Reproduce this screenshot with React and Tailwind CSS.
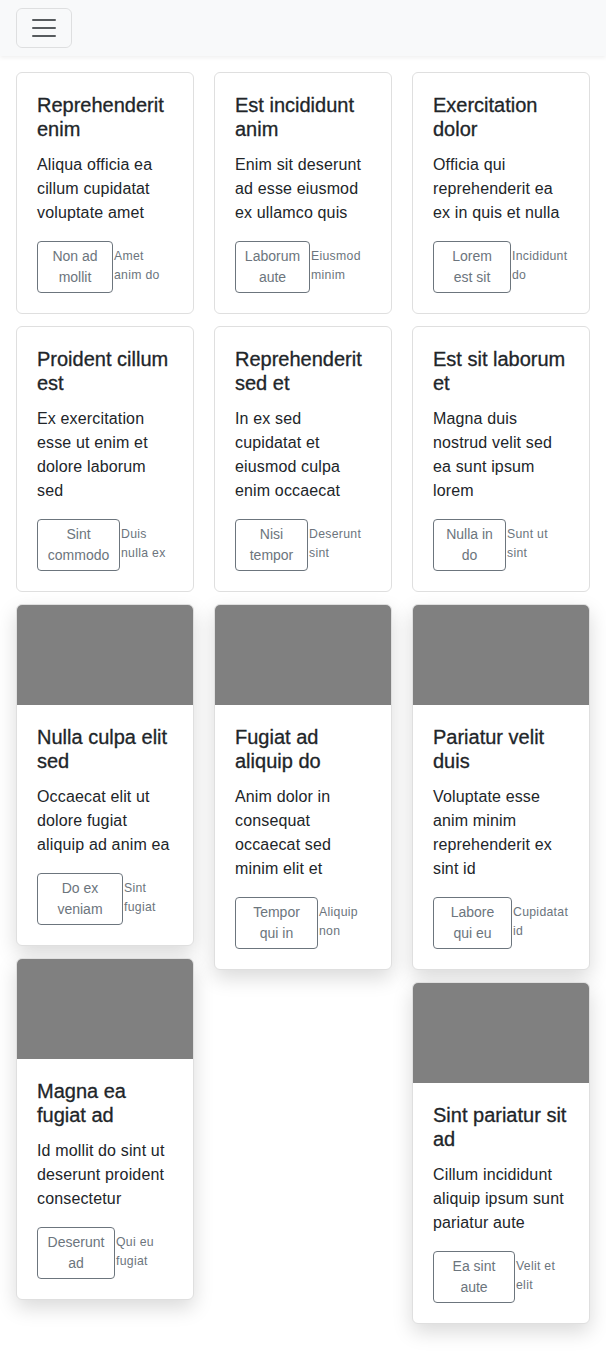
const GRID = [
  { title:"Reprehenderit enim", text:"Aliqua officia ea cillum cupidatat voluptate amet", btn:"Non ad mollit", w:"w-[76px]", note:"Amet anim do" },
  { title:"Est incididunt anim", text:"Enim sit deserunt ad esse eiusmod ex ullamco quis", btn:"Laborum aute", w:"w-[75px]", note:"Eiusmod minim" },
  { title:"Exercitation dolor", text:"Officia qui reprehenderit ea ex in quis et nulla", btn:"Lorem est sit", w:"w-[78px]", note:"Incididunt do" },
  { title:"Proident cillum est", text:"Ex exercitation esse ut enim et dolore laborum sed", btn:"Sint commodo", w:"w-[83px]", note:"Duis nulla ex" },
  { title:"Reprehenderit sed et", text:"In ex sed cupidatat et eiusmod culpa enim occaecat", btn:"Nisi tempor", w:"w-[73px]", note:"Deserunt sint" },
  { title:"Est sit laborum et", text:"Magna duis nostrud velit sed ea sunt ipsum lorem", btn:"Nulla in do", w:"w-[73px]", note:"Sunt ut sint" },
];

const COLUMNS = [
  [
    { title:"Nulla culpa elit sed", text:"Occaecat elit ut dolore fugiat aliquip ad anim ea", btn:"Do ex veniam", w:"w-[86px]", note:"Sint fugiat" },
    { title:"Magna ea fugiat ad", text:"Id mollit do sint ut deserunt proident consectetur", btn:"Deserunt ad", w:"w-[78px]", note:"Qui eu fugiat" },
  ],
  [
    { title:"Fugiat ad aliquip do", text:"Anim dolor in consequat occaecat sed minim elit et", btn:"Tempor qui in", w:"w-[83px]", note:"Aliquip non" },
  ],
  [
    { title:"Pariatur velit duis", text:"Voluptate esse anim minim reprehenderit ex sint id", btn:"Labore qui eu", w:"w-[79px]", note:"Cupidatat id" },
    { title:"Sint pariatur sit ad", text:"Cillum incididunt aliquip ipsum sunt pariatur aute", btn:"Ea sint aute", w:"w-[82px]", note:"Velit et elit" },
  ],
];

const CardBody = ({ item }) => (
  <div className="p-5">
    <h5 className="text-[20px] leading-6 font-medium mb-3 [-webkit-text-stroke:0.3px_#212529]">{item.title}</h5>
    <p className="text-base leading-6 tracking-[0.15px] mb-4">{item.text}</p>
    <div className="flex items-start">
      <button className={`${item.w} shrink-0 border border-[#6c757d] text-[#6c757d] rounded px-2 py-1 text-sm leading-[21px] text-center`}>
        {item.btn}
      </button>
      <small className="flex-1 min-w-0 pl-px text-[#6c757d] text-[12.25px] leading-[19px] tracking-[0.3px] pt-[6px]">{item.note}</small>
    </div>
  </div>
);

const App = () => {
  return (
    <div className="min-h-[1352px] bg-white text-[#212529]" style={{ fontFamily:"'Liberation Sans', Arial, sans-serif" }}>

      {/* Navbar */}
      <nav className="h-14 bg-[#f8f9fa] shadow-[0_2px_4px_rgba(0,0,0,0.06)] px-4 flex items-center">
        <button className="w-14 h-10 border border-black/10 rounded-md flex items-center justify-center">
          <svg width="30" height="30" viewBox="0 0 30 30">
            <path d="M4 7h22M4 15h22M4 23h22" stroke="rgba(33,37,41,0.75)" strokeWidth="2" strokeLinecap="round" fill="none" />
          </svg>
        </button>
      </nav>

      <main className="px-4 pt-4 pb-7">
        <div className="grid grid-cols-3 gap-x-5 gap-y-3">
          {GRID.map((item, i) => (
            <div key={i} className="bg-white border border-[#dfdfdf] rounded-md">
              <CardBody item={item} />
            </div>
          ))}
        </div>

        <div className="grid grid-cols-3 gap-x-5 mt-3 items-start">
          {COLUMNS.map((col, c) => (
            <div key={c} className="flex flex-col gap-3">
              {col.map((item, i) => (
                <div key={i} className="bg-white border border-[#dfdfdf] rounded-md overflow-hidden shadow-[0_8px_20px_rgba(0,0,0,0.15)]">
                  <div className="h-[100px] bg-[#808080]" />
                  <CardBody item={item} />
                </div>
              ))}
            </div>
          ))}
        </div>
      </main>
    </div>
  );
};

export default App;
